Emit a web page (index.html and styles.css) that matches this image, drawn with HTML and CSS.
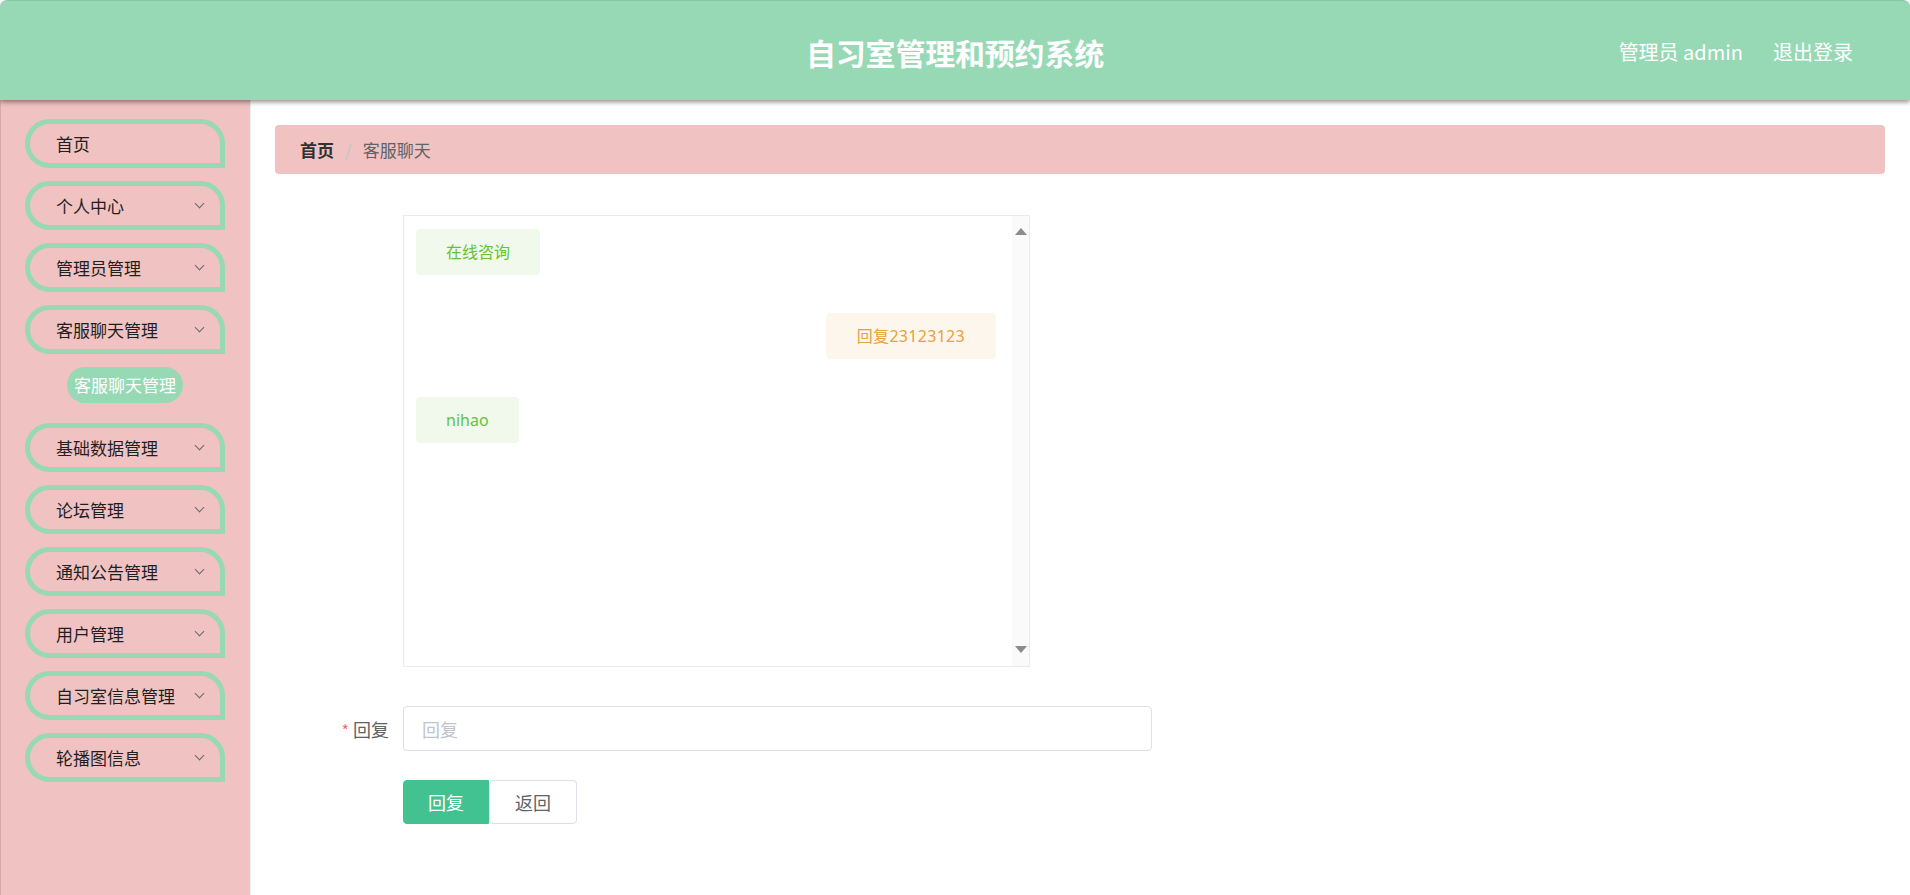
FILE: index.html
```html
<!DOCTYPE html>
<html lang="zh">
<head>
<meta charset="utf-8">
<title>自习室管理和预约系统</title>
<link rel="stylesheet" href="styles.css">
</head>
<body>
<header class="header">
  <div class="header-side"></div>
  <h1 class="title">自习室管理和预约系统</h1>
  <div class="header-user">
    <span>管理员 admin</span>
    <span>退出登录</span>
  </div>
</header>
<div class="layout">
  <aside class="sidebar">
    <div class="menu-item"><span>首页</span></div>
    <div class="menu-item"><span>个人中心</span><i class="chev"></i></div>
    <div class="menu-item"><span>管理员管理</span><i class="chev"></i></div>
    <div class="menu-item open"><span>客服聊天管理</span><i class="chev"></i></div>
    <div class="sub-item">客服聊天管理</div>
    <div class="menu-item"><span>基础数据管理</span><i class="chev"></i></div>
    <div class="menu-item"><span>论坛管理</span><i class="chev"></i></div>
    <div class="menu-item"><span>通知公告管理</span><i class="chev"></i></div>
    <div class="menu-item"><span>用户管理</span><i class="chev"></i></div>
    <div class="menu-item"><span>自习室信息管理</span><i class="chev"></i></div>
    <div class="menu-item"><span>轮播图信息</span><i class="chev"></i></div>
  </aside>
  <main class="main">
    <nav class="breadcrumb">
      <span class="bc-home">首页</span>
      <span class="bc-sep">/</span>
      <span class="bc-cur">客服聊天</span>
    </nav>
    <div class="form">
      <div class="form-row">
        <div class="form-label"></div>
        <div class="chat-box">
          <div class="chat-list">
            <div class="msg msg-left"><div class="bubble bubble-green">在线咨询</div></div>
            <div class="msg msg-right"><div class="bubble bubble-orange">回复23123123</div></div>
            <div class="msg msg-left"><div class="bubble bubble-green">nihao</div></div>
          </div>
          <div class="scrollbar">
            <i class="arrow-up"></i>
            <i class="arrow-down"></i>
          </div>
        </div>
      </div>
      <div class="form-row row-input">
        <label class="form-label"><em class="req">*</em>回复</label>
        <div class="input">回复</div>
      </div>
      <div class="form-row row-btns">
        <div class="form-label"></div>
        <div class="btns">
          <button class="btn btn-primary">回复</button>
          <button class="btn btn-default">返回</button>
        </div>
      </div>
    </div>
  </main>
</div>
</body>
</html>
```

FILE: styles.css
```css
html, body {
  margin: 0;
  padding: 0;
}
body {
  font-family: "Noto Sans", "Noto Sans CJK SC", sans-serif;
  color: #303133;
  background: #ffffff;
  width: 1910px;
  height: 895px;
  overflow: hidden;
  display: flex;
  flex-direction: column;
}
.header {
  height: 100px;
  flex: 0 0 100px;
  background: #97d9b5;
  border-radius: 8px 8px 0 0;
  border-top: 1px solid #86c6a3;
  box-sizing: border-box;
  box-shadow: 0 2px 5px rgba(0, 0, 0, 0.45);
  display: grid;
  grid-template-columns: 1fr auto 1fr;
  align-items: center;
  position: relative;
  z-index: 2;
}
.title {
  margin: 0;
  font-size: 30px;
  font-weight: 700;
  color: #ffffff;
  font-family: "Noto Sans CJK SC", sans-serif;
  line-height: 1;
  letter-spacing: -0.2px;
  padding-top: 2px;
}
.header-user {
  justify-self: end;
  padding-right: 57px;
  display: flex;
  gap: 30px;
  color: #ffffff;
  font-size: 20px;
  font-family: "Noto Sans CJK SC", sans-serif;
  padding-top: 2px;
}
.layout {
  flex: 1;
  display: flex;
  min-height: 0;
}
.sidebar {
  width: 250px;
  flex: 0 0 250px;
  background: #f0c2c2;
  box-sizing: border-box;
  padding-top: 19px;
  box-shadow: inset 1px 0 0 #d9a9a9, 1px 0 0 #ececec;
  display: flex;
  flex-direction: column;
  font-family: "Noto Sans CJK SC", sans-serif;
}
.menu-item {
  width: 200px;
  height: 49px;
  box-sizing: border-box;
  margin-left: 25px;
  margin-bottom: 13px;
  border: 5px solid #97d9b5;
  border-radius: 25px 25px 0 25px;
  display: flex;
  align-items: center;
  justify-content: space-between;
  padding: 0 17px 0 26px;
  font-size: 17px;
  font-weight: 400;
  color: #1f1f1f;
}
.chev {
  width: 6px;
  height: 6px;
  border-right: 1px solid #6b6b6b;
  border-bottom: 1px solid #6b6b6b;
  transform: rotate(45deg);
  margin-top: -4px;
}
.sub-item {
  align-self: center;
  height: 36px;
  line-height: 36px;
  padding: 0 7px;
  border-radius: 18px;
  background: #97d9b5;
  color: #ffffff;
  font-size: 17px;
  margin-bottom: 20px;
}
.main {
  flex: 1;
  padding: 25px 25px 0 25px;
  box-sizing: border-box;
}
.breadcrumb {
  height: 49px;
  background: #f0c2c2;
  border-radius: 4px;
  display: flex;
  align-items: center;
  padding-left: 25px;
  font-size: 17px;
  font-family: "Noto Sans CJK SC", sans-serif;
}
.bc-home {
  font-weight: 700;
  color: #303133;
}
.bc-sep {
  color: #c0c4cc;
  margin: 0 11px 0 11px;
}
.bc-cur {
  color: #606266;
}
.form {
  padding-top: 41px;
}
.form-row {
  display: flex;
  align-items: center;
}
.form-label {
  width: 128px;
  flex: 0 0 128px;
  box-sizing: border-box;
  padding-right: 14px;
  text-align: right;
  font-size: 18px;
  color: #606266;
  font-family: "Noto Sans CJK SC", sans-serif;
}
.req {
  font-style: normal;
  color: #f56c6c;
  margin-right: 4px;
  font-size: 16px;
}
.chat-box {
  width: 627px;
  height: 452px;
  box-sizing: border-box;
  border: 1px solid #ebebeb;
  display: flex;
}
.chat-list {
  flex: 1;
  padding: 13px 16px 0 12px;
  display: flex;
  flex-direction: column;
  gap: 38px;
}
.msg {
  display: flex;
}
.msg-right {
  justify-content: flex-end;
}
.bubble {
  height: 46px;
  line-height: 46px;
  padding: 0 30px;
  border-radius: 4px;
  font-size: 16px;
  font-family: "Noto Sans", "Noto Sans CJK SC", sans-serif;
}
.bubble-green {
  background: #f0f9eb;
  color: #67c23a;
}
.bubble-orange {
  background: #fdf6ec;
  color: #e6a23c;
  padding: 0 31px;
  letter-spacing: 0.3px;
}
.scrollbar {
  width: 17px;
  flex: 0 0 17px;
  background: #fafafa;
  display: flex;
  flex-direction: column;
  justify-content: space-between;
  align-items: center;
  padding: 12px 0 13px;
  box-sizing: border-box;
}
.arrow-up {
  width: 0;
  height: 0;
  border-left: 6px solid transparent;
  border-right: 6px solid transparent;
  border-bottom: 7px solid #8c8c8c;
}
.arrow-down {
  width: 0;
  height: 0;
  border-left: 6px solid transparent;
  border-right: 6px solid transparent;
  border-top: 7px solid #8c8c8c;
}
.row-input {
  margin-top: 39px;
}
.input {
  width: 749px;
  height: 45px;
  box-sizing: border-box;
  border: 1px solid #dcdfe6;
  border-radius: 4px;
  padding-left: 18px;
  display: flex;
  align-items: center;
  font-size: 18px;
  color: #c0c4cc;
  font-family: "Noto Sans CJK SC", sans-serif;
}
.row-btns {
  margin-top: 29px;
}
.btns {
  display: flex;
}
.btn {
  height: 44px;
  font-size: 18px;
  font-family: "Noto Sans CJK SC", sans-serif;
  border-radius: 4px;
  cursor: pointer;
  padding: 0;
}
.btn-primary {
  width: 86px;
  background: #42c290;
  border: 1px solid #42c290;
  color: #ffffff;
  border-radius: 4px 0 0 4px;
}
.btn-default {
  width: 88px;
  background: #ffffff;
  border: 1px solid #dcdfe6;
  color: #606266;
}
```
